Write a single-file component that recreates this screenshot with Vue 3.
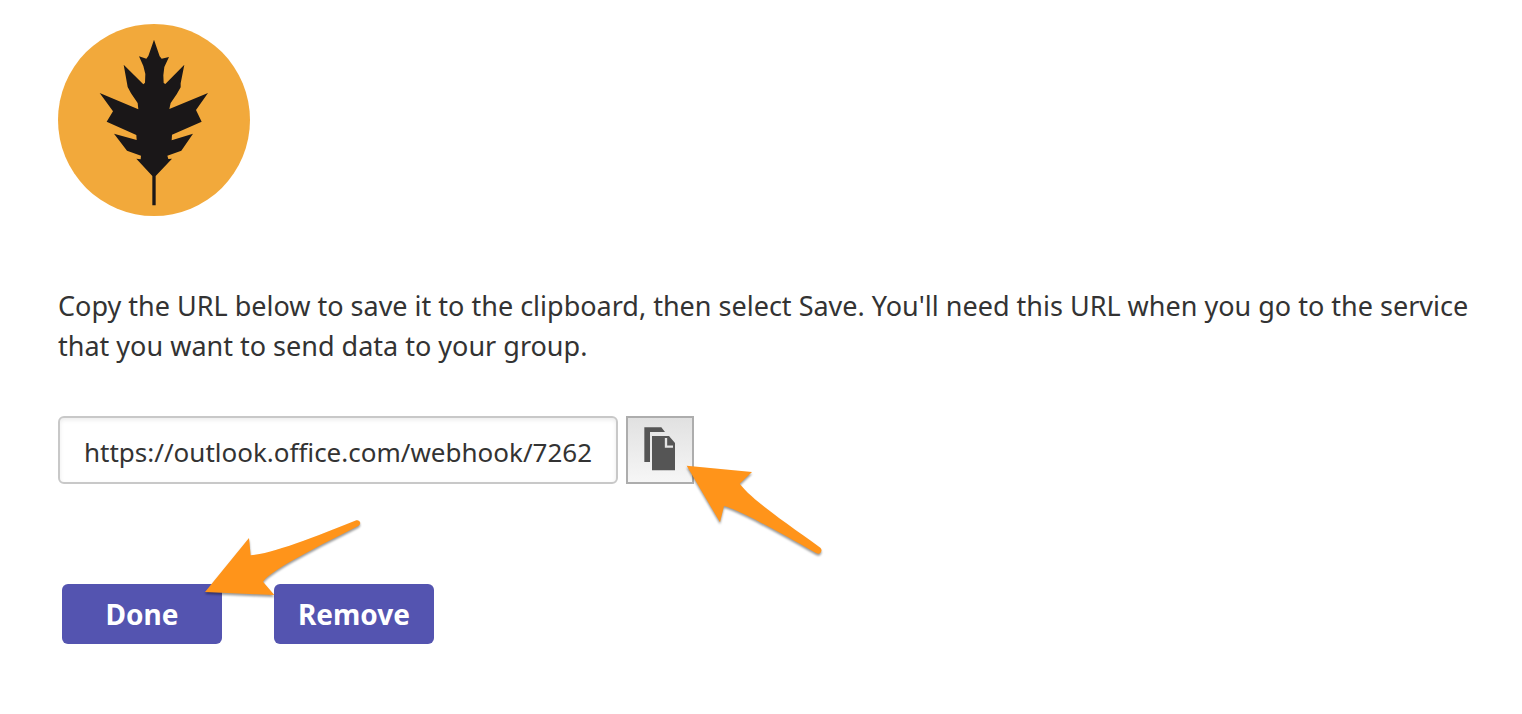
<script setup>
import { ref } from 'vue'

const webhookUrl = ref('https://outlook.office.com/webhook/7262')
</script>

<template>
  <main class="page">
    <svg class="logo" viewBox="0 0 576 576" role="img" aria-label="Oak leaf">
      <circle cx="288" cy="288" r="288" fill="#f2a93b" />
      <path
        fill="#1a1718"
        d="M288 47 L305 97 L311 104 L333 99 L319 129 L316 154 L317 177 L322 180 L379 122 L368 178 L368 190 L356 211 L338 237 L334 255 L450 207 L414 258 L431 293 L342 332 L341 349 L405 329 L370 380 L328 395 L331 405 L342 404 L293 456 L293 544 L283 544 L283 456 L235 404 L248 406 L249 395 L207 380 L168 329 L236 348 L235 333 L146 293 L165 262 L125 207 L241 256 L239 237 L219 208 L209 189 L207 178 L197 122 L256 181 L261 176 L262 150 L256 126 L243 97 L265 104 L271 96 Z"
      />
    </svg>

    <p class="hint" id="url-hint">
      Copy the URL below to save it to the clipboard, then select Save. You'll need this URL when
      you go to the service that you want to send data to your group.
    </p>

    <div class="url-row">
      <input
        v-model="webhookUrl"
        class="url"
        type="text"
        readonly
        aria-label="Webhook URL"
        aria-describedby="url-hint"
      />
      <div class="anchor">
        <button class="copy" type="button" aria-label="Copy URL">
          <svg class="copy-icon" viewBox="0 0 96 132" aria-hidden="true">
            <path fill="#555" d="M1 1 H52 L63 15 H18 V105 H1 Z" />
            <path fill="#555" d="M24 27 H75 L93 48 V130 H24 Z" />
            <path fill="none" stroke="#e4e4e4" stroke-width="7" d="M66 33 V59 H87" />
          </svg>
        </button>
        <svg class="arrow arrow-copy" viewBox="0 0 450 300" aria-hidden="true">
          <path
            fill="#ff941a"
            d="M20 17 L216 36 L179 71 C216 120 320 190 421 263 Q428 271 421 279 Q416 283 408 279 C310 224 190 155 132 138 L120 187 Z"
          />
        </svg>
      </div>
    </div>

    <div class="actions">
      <div class="anchor">
        <button class="action" type="button">Done</button>
        <svg class="arrow arrow-done" viewBox="0 0 495 255" aria-hidden="true">
          <path
            fill="#ff941a"
            d="M15 225 L147 63 L152 115 C215 111 350 58 469 10 Q479 8 481 18 Q480 25 473 28 C360 86 218 156 189 194 L223 234 Z"
          />
        </svg>
      </div>
      <button class="action" type="button">Remove</button>
    </div>
  </main>
</template>

<style>
body {
  margin: 0;
  background: #fff;
}
</style>

<style scoped>
.page {
  padding: 24px 48px 70px 58px;
  font-family: Tahoma, "Noto Sans", sans-serif;
  font-size: 27px;
  line-height: 40px;
  color: #333;
}

.logo {
  display: block;
  width: 192px;
  height: 192px;
}

.hint {
  margin: 70px 0 50px;
}

.url-row {
  display: flex;
  gap: 8px;
}

.url {
  box-sizing: border-box;
  width: 560px;
  height: 68px;
  padding: 4px 24px 0;
  border: 2px solid #c8c8c8;
  border-radius: 6px;
  background: #fff;
  box-shadow: inset 0 2px 4px rgba(0, 0, 0, 0.08);
  font: inherit;
  font-size: 26px;
  color: inherit;
}

.anchor {
  position: relative;
}

.copy {
  display: flex;
  box-sizing: border-box;
  width: 68px;
  height: 68px;
  padding: 9px 16px;
  border: 2px solid #adadad;
  background: linear-gradient(#e1e1e1, #f6f6f6);
}

.copy-icon {
  width: 32px;
  height: 44px;
}

.arrow {
  position: absolute;
  z-index: 1;
  overflow: visible;
  pointer-events: none;
  filter: drop-shadow(0 2px 1px rgba(0, 0, 0, 0.4));
}

.arrow-copy {
  top: 44px;
  left: 54px;
  width: 150px;
  height: 100px;
}

.arrow-done {
  top: -67px;
  left: 138px;
  width: 165px;
  height: 85px;
}

.actions {
  display: flex;
  gap: 52px;
  margin: 100px 4px 0;
}

.action {
  display: block;
  width: 160px;
  height: 60px;
  padding: 0;
  border: 0;
  border-radius: 6px;
  background: #5454b0;
  font: inherit;
  font-size: 28px;
  font-weight: 700;
  color: #fff;
}
</style>
